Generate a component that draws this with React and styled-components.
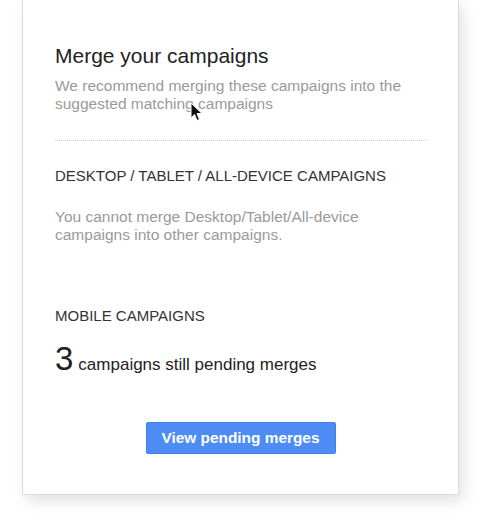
import React from "react";
import styled, { createGlobalStyle } from "styled-components";

const GlobalStyle = createGlobalStyle`
  body {
    margin: 0;
    background: #ffffff;
    font-family: "Liberation Sans", Arial, sans-serif;
  }
`;

const Page = styled.div`
  width: 481px;
  height: 520px;
  padding: 0 22px 0 22px;
  box-sizing: border-box;
  position: relative;
`;

const Card = styled.div`
  width: 437px;
  height: 495px;
  box-sizing: border-box;
  background: #ffffff;
  border: 1px solid #dcdcdc;
  border-top: none;
  box-shadow: 4px 6px 14px rgba(0, 0, 0, 0.12);
  padding: 44px 32px 0 32px;
  display: flex;
  flex-direction: column;
`;

const Title = styled.h1`
  margin: 0;
  font-size: 21px;
  font-weight: normal;
  color: #222222;
  line-height: 24px;
`;

const Muted = styled.p`
  margin: ${(p) => p.margin || "0"};
  font-size: 15.5px;
  line-height: 18px;
  color: #9a9a9a;
`;

const Dotted = styled.div`
  margin: 27px 0 0 0;
  height: 0;
  border-top: 1px dotted #d4d4d4;
  width: 373px;
`;

const SectionHead = styled.h2`
  margin: ${(p) => p.margin || "0"};
  font-size: 15px;
  font-weight: normal;
  color: #333333;
  line-height: 18px;
`;

const Pending = styled.div`
  margin-top: 16px;
  display: flex;
  align-items: baseline;
  gap: 5px;
  color: #222222;
`;

const Count = styled.span`
  font-size: 33px;
  line-height: 36px;
`;

const PendingText = styled.span`
  font-size: 17px;
`;

const ButtonRow = styled.div`
  margin-top: 45px;
  display: flex;
  justify-content: center;
`;

const PrimaryButton = styled.button`
  width: 190px;
  height: 32px;
  border: 1px solid #3f7fe6;
  border-radius: 2px;
  background: #4d8cf4;
  color: #ffffff;
  font-family: "Liberation Sans", Arial, sans-serif;
  font-size: 15.4px;
  font-weight: bold;
  padding: 0;
`;

const Cursor = styled.svg`
  position: absolute;
  left: 190px;
  top: 102px;
`;

const App = () => {
  return (
    <Page>
      <GlobalStyle />
      <Card>
        <Title>Merge your campaigns</Title>
        <Muted margin="9px 0 0 0">
          We recommend merging these campaigns into the suggested matching campaigns
        </Muted>
        <Dotted />
        <SectionHead margin="26px 0 0 0">DESKTOP / TABLET / ALL-DEVICE CAMPAIGNS</SectionHead>
        <Muted margin="23px 0 0 0">
          You cannot merge Desktop/Tablet/All-device campaigns into other campaigns.
        </Muted>
        <SectionHead margin="63px 0 0 0">MOBILE CAMPAIGNS</SectionHead>
        <Pending>
          <Count>3</Count>
          <PendingText>campaigns still pending merges</PendingText>
        </Pending>
        <ButtonRow>
          <PrimaryButton>View pending merges</PrimaryButton>
        </ButtonRow>
      </Card>
      <Cursor width="14" height="21" viewBox="0 0 14 21">
        <path
          d="M1 1 L1 16 L4.5 12.5 L7 18.5 L9.5 17.5 L7 11.5 L12 11.5 Z"
          fill="#111111"
          stroke="#ffffff"
          strokeWidth="1"
          strokeLinejoin="round"
        />
      </Cursor>
    </Page>
  );
};

export default App;
